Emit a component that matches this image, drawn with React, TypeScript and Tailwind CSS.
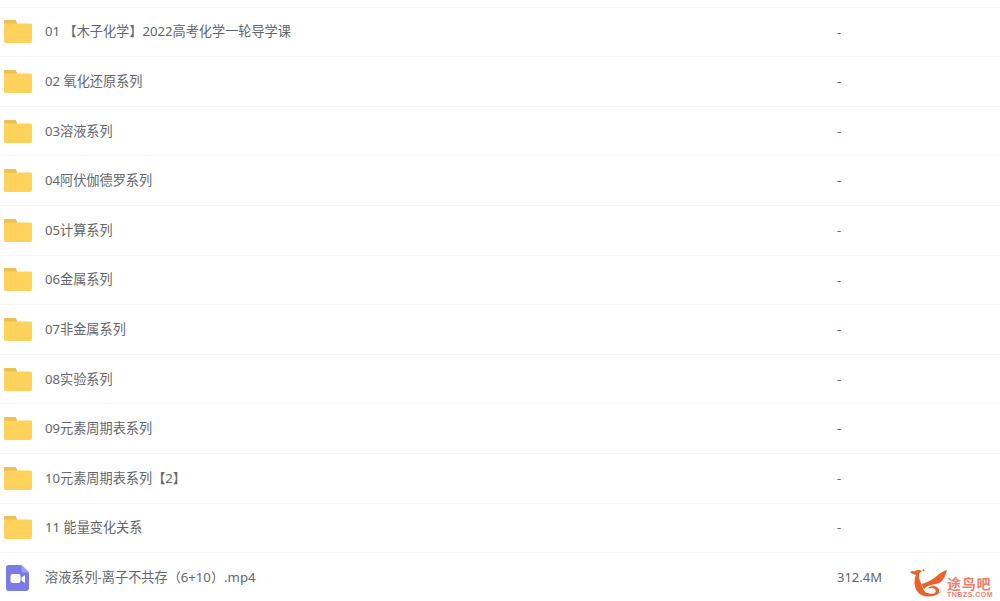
const folders = [
  "01 【木子化学】2022高考化学一轮导学课",
  "02 氧化还原系列",
  "03溶液系列",
  "04阿伏伽德罗系列",
  "05计算系列",
  "06金属系列",
  "07非金属系列",
  "08实验系列",
  "09元素周期表系列",
  "10元素周期表系列【2】",
  "11 能量变化关系",
]

const FolderIcon = () => (
  <svg width="28" height="23" viewBox="0 0 28 23">
    <path d="M1 0h9.5c1 0 1.5.5 1.9 1.4L13.4 4H1a1 1 0 0 1-1-1V1a1 1 0 0 1 1-1z" fill="#f0bf52" />
    <path d="M0 3.4h26.6A1.4 1.4 0 0 1 28 4.8v16.8a1.4 1.4 0 0 1-1.4 1.4H1.4A1.4 1.4 0 0 1 0 21.6V3.4z" fill="#ffd25c" />
  </svg>
)

const VideoIcon = () => (
  <svg width="23" height="26" viewBox="0 0 23 26" className="ml-[2px]">
    <path d="M3 0h12.5L23 7.5V23a3 3 0 0 1-3 3H3a3 3 0 0 1-3-3V3a3 3 0 0 1 3-3z" fill="#7b7be8" />
    <path d="M15.5 0L23 7.5h-5.5a2 2 0 0 1-2-2z" fill="#9d9df0" />
    <rect x="4.5" y="9" width="10" height="9" rx="2" fill="#fff" />
    <path d="M15.5 12.5l3.5-2.4v7.8l-3.5-2.4z" fill="#fff" />
  </svg>
)

const Row = ({ icon, name, size }: { icon: React.ReactNode; name: string; size: string }) => (
  <div className="flex items-center h-[49.6px] border-b border-[#f6f6f6]">
    <div className="w-[45px] shrink-0 pl-[4px] flex items-center">{icon}</div>
    <span className="flex-1 pt-[0.6px] text-[13.17px] text-[#63676c] whitespace-pre">{name}</span>
    <span className="w-[163px] pt-[0.6px] text-[13px] text-[#63676c]">{size}</span>
  </div>
)

const Watermark = () => (
  <div className="absolute left-[910px] top-[569px] flex items-start">
    <svg width="38" height="29" viewBox="0 0 38 29">
      <path d="M0 3C2 1.5 4 2 5 2.5 6 .8 10 .5 12 2.5 10 3 9 4 9 6c-.5 3 1 6 2.500 9 .8 3 2 6 3.500 8 5 3 12 2 17-1-5 5-12 6.500-18 5C4 24 3 12 6 6 4 5.500 2 5 0 3z" fill="#e8622a" />
      <circle cx="13.500" cy="1.200" r="1" fill="#e8622a" />
      <path d="M12 15c6-2 12-5 16-9 3-2.500 6-4 9-5-1 4-3 9-6 12-4 2.500-9 2-13 4-2 1-3 2-4 3-1-2-2-3-2-5z" fill="#e8622a" />
      <path d="M17 20c3-4 10-4 12 .5 1 3-2 5-5 4.500 2-1.500 2.500-4.500 0-5.500-2-.7-5-.5-7 .5z" fill="#e8622a" />
    </svg>
    <div className="ml-[-1px] mt-[8px] flex flex-col items-start text-[#ee7f6c] font-bold font-['Liberation_Sans','Noto_Sans_CJK_SC',sans-serif]">
      <span className="text-[14px] leading-[14px] tracking-[0.7px]">途鸟吧</span>
      <span className="text-[7px] leading-[7px] tracking-[0.5px]">TNBZS.COM</span>
    </div>
  </div>
)

const App: React.FC = () => {
  return (
    <div className="relative w-[1000px] h-[601px] overflow-hidden bg-white font-['Noto_Sans','Noto_Sans_CJK_SC',sans-serif]">
      <div className="h-[7.7px] border-b border-[#f6f6f6]" />
      {folders.map((name) => (
        <Row key={name} icon={<FolderIcon />} name={name} size="-" />
      ))}
      <Row icon={<VideoIcon />} name="溶液系列-离子不共存（6+10）.mp4" size="312.4M" />
      <Watermark />
    </div>
  )
}

export default App
